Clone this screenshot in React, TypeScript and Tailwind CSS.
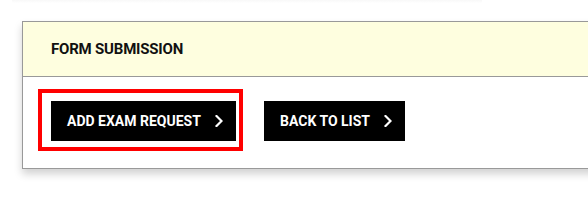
import React from "react";

const Chevron = () => (
  <svg width="8" height="12" viewBox="0 0 8 12" fill="none" className="shrink-0">
    <path d="M1.5 1L6.5 6L1.5 11" stroke="white" strokeWidth="2.2" strokeLinecap="square" />
  </svg>
);

const ActionButton = ({ label, gap }: { label: string; gap: string }) => (
  <button
    className={`flex h-[40px] items-center bg-black pl-[16px] pr-[13px] text-[14px] font-bold uppercase text-white ${gap}`}
  >
    <span className="leading-none">{label}</span>
    <Chevron />
  </button>
);

export default function App() {
  return (
    <div
      className="relative h-[202px] w-[588px] overflow-hidden bg-white"
      style={{ fontFamily: "Roboto, 'Liberation Sans', sans-serif" }}
    >
      <div className="absolute left-[12px] top-0 h-[3px] w-[470px] bg-gradient-to-b from-[#f8f8f8] to-white" />
      <div className="ml-[22px] mt-[21px] w-[590px] border border-[#999999] bg-white shadow-[0_5px_8px_rgba(0,0,0,0.18)]">
        <div className="flex h-[55px] items-center border-b border-[#999999] bg-[#fefedf] pl-[28px]">
          <h2 className="text-[15px] font-bold uppercase tracking-[-0.2px] text-[#111111]">Form Submission</h2>
        </div>
        <div className="flex items-start pb-[17px] pl-[15px] pt-[12px]">
          <div className="border-4 border-[#ff0000] pb-[6px] pl-[9px] pr-[3px] pt-[8px]">
            <ActionButton label="Add Exam Request" gap="justify-between w-[185px]" />
          </div>
          <div className="ml-[21px] mt-[12px]">
            <ActionButton label="Back to List" gap="justify-between w-[141px]" />
          </div>
        </div>
      </div>
    </div>
  );
}
